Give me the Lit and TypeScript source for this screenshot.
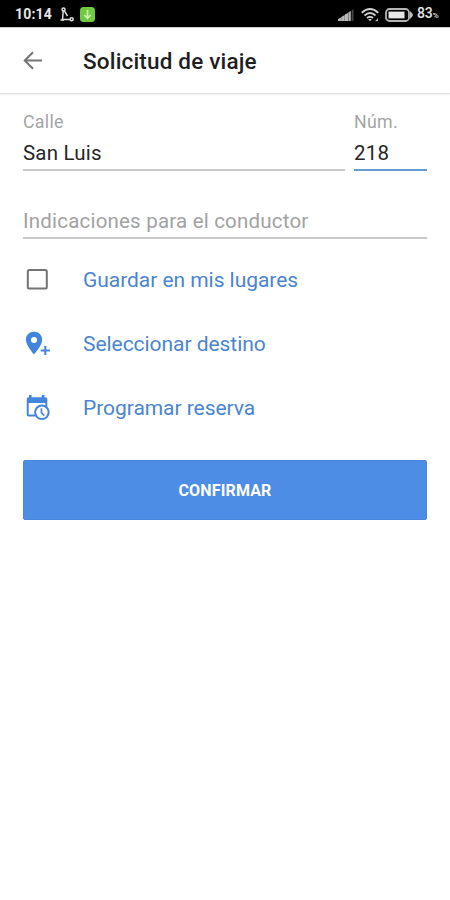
import { LitElement, html, css, svg } from "lit";
import { customElement } from "lit/decorators.js";

@customElement("status-bar")
class StatusBar extends LitElement {
  static styles = css`
    :host { display: flex; align-items: center; height: 27px; background: #000; color: #e6e6e6;
      font: 700 14px/27px Roboto, sans-serif; border-bottom: 1px solid #c9c9c9; box-sizing: content-box; }
    svg { display: block; flex: none; }
    .time { margin-left: 15px; width: 45px; letter-spacing: 0.2px; padding-top: 2px; }
    .route { margin-top: 1px; }
    .app { margin-left: 6px; margin-top: 1px; }
    .space { flex: 1; }
    .signal { margin-top: 2px; }
    .wifi { margin-left: 7px; margin-top: 2px; }
    .battery { margin-left: 6px; margin-top: 2px; }
    .level { margin-left: 4px; width: 33px; font-weight: 500; letter-spacing: -0.1px; padding-top: 2px; white-space: nowrap; }
    .pct { font-size: 8px; }
  `;
  render() {
    return html`
      <span class="time">10:14</span>
      <svg class="route" width="14" height="15" viewBox="0 0 14 15" fill="none" stroke="#e0e0e0" stroke-width="1.5">
        <circle cx="3.5" cy="2.4" r="1.5" /><path d="M3.2 4L2.5 12.6H10M4.6 4.2L7.5 9" />
        <circle cx="11.6" cy="12.3" r="1.5" /><path d="M.5 13H4" />
      </svg>
      <svg class="app" width="15" height="15" viewBox="0 0 15 15">
        <rect width="15" height="15" rx="3.5" fill="#6fc943" />
        <path d="M7.5 3V11M4.3 8L7.5 11.2L10.7 8" fill="none" stroke="#c9f3ac" stroke-width="1.7" />
      </svg>
      <span class="space"></span>
      <svg class="signal" width="16" height="12" viewBox="0 0 16 12" fill="#b8b8b8">
        <path d="M0 12V10L3 8.5V12ZM3.2 12V8L6.7 6V12ZM6.9 12V5.5L10.3 3.7V12Z" /><path d="M10.5 12V3.2L12.8 2V12Z" />
        <path d="M13.6 12V1.5L15.5 0V12Z" fill="#444" />
      </svg>
      <svg class="wifi" width="18" height="14" viewBox="0 0 18 14" fill="none" stroke="#d0d0d0" stroke-width="1.9">
        <path d="M.8 4.8Q9-2.6 17.2 4.8M3.5 7.5Q9 2.6 14.5 7.5M6 10Q9 7.5 12 10" /><path d="M7.2 11L9 13.2L10.8 11Z" fill="#d0d0d0" stroke="none" />
        <path d="M14 13.3H17V10Z" fill="#aaa" stroke="none" />
      </svg>
      <svg class="battery" width="28" height="14" viewBox="0 0 28 14">
        <rect x="1" y="1" width="23" height="12" rx="3.5" fill="none" stroke="#b5b5b5" stroke-width="1.8" />
        <rect x="3.5" y="3.6" width="16" height="6.8" fill="#e5e5e5" /><path d="M25 3L27.8 6V8L25 11Z" fill="#bbb" />
      </svg>
      <span class="level">83<span class="pct">%</span></span>`;
  }
}

@customElement("text-field")
class TextField extends LitElement {
  static properties = { label: {}, value: {}, active: { type: Boolean } };
  declare label: string;
  declare value: string;
  declare active: boolean;
  static styles = css`
    :host { display: flex; flex-direction: column; box-sizing: border-box; border-bottom: 2px solid #c9c9c9; }
    :host([active]) { border-color: #659dd4; }
    .label { font-size: 17.8px; line-height: 24px; color: #a5a5a5; letter-spacing: 0.3px; padding-top: 1px; }
    .value { font-size: 20.5px; line-height: 28px; color: #262626; margin-top: 5px; letter-spacing: 0.2px; }
    .hint { font-size: 20.5px; line-height: 28px; color: #a2a2a2; letter-spacing: 0.2px; }
  `;
  render() {
    return this.value
      ? html`<span class="label">${this.label}</span><span class="value">${this.value}</span>`
      : html`<span class="hint">${this.label}</span>`;
  }
}

const box = svg`<rect x="4.8" y="4" width="19" height="18.6" rx="1.6" fill="none" stroke="#747474" stroke-width="2"/>`;
const pin = svg`<path fill-rule="evenodd" d="M11 1.8C6.4 1.8 2.9 5.3 2.9 9.8C2.9 15.7 11 24.4 11 24.4S19.2 15.7 19.2 9.8C19.2 5.3 15.7 1.8 11 1.8ZM11 6.9A3 3 0 1 1 11 12.9A3 3 0 1 1 11 6.9Z"/>
  <path d="M21.3 15.9H23.3V19.4H26.9V21.4H23.3V25H21.3V21.4H17.7V19.4H21.3Z"/>`;
const calendar = svg`<path d="M6 1H8.6V3.2H18.8V1H21.4V3.2H22.3Q24.3 3.2 24.3 5.2V13H22.3V9H5.7V20.6H13V22.6H5.7Q3.7 22.6 3.7 20.6V5.2Q3.7 3.2 5.7 3.2H6Z"/>
  <circle cx="18.9" cy="18.3" r="6.8" fill="#fff" stroke="#4384dc" stroke-width="2"/>
  <path d="M18.4 14.2V18.6L21.2 21.6" fill="none" stroke="#4384dc" stroke-width="1.6"/>`;

@customElement("app-root")
class AppRoot extends LitElement {
  static styles = css`
    :host { display: flex; flex-direction: column; height: 900px; background: #fff; font-family: Roboto, sans-serif; overflow: hidden; }
    svg { display: block; flex: none; }
    header { display: flex; align-items: center; border-bottom: 1px solid #dedede; box-shadow: 0 1px 2px #eee; box-sizing: border-box; height: 66px; padding-left: 23px; }
    h1 { margin: 0 0 0 40px; font-size: 22.5px; line-height: 30px; font-weight: 500; color: #1f1f1f; letter-spacing: 0.17px; }
    main { display: flex; flex-direction: column; padding: 15px 23px 0; }
    .address { display: grid; grid-template-columns: 322px 73px; gap: 9px; height: 62px; }
    .notes { margin-top: 36px; height: 32px; }
    ul { list-style: none; margin: 9px 0 0; padding: 0; }
    li { display: flex; align-items: center; height: 64px; color: #4a85cf; font-size: 21px; letter-spacing: -0.05px; gap: 32px; }
    button { margin-top: 20px; height: 60px; border: 1px solid #4a86d9; border-radius: 2px; background: #4e8de5; color: #fff;
      font: 700 16px/24px Roboto, sans-serif; letter-spacing: 0.15px; padding: 2px 0 0; }
  `;
  private actions = [
    { icon: box, text: "Guardar en mis lugares" },
    { icon: pin, text: "Seleccionar destino" },
    { icon: calendar, text: "Programar reserva" },
  ];
  render() {
    return html`
      <status-bar></status-bar>
      <header>
        <svg width="20" height="20" viewBox="0 0 20 20" fill="none" stroke="#757575" stroke-width="2">
          <path d="M19 9.5H2M10 1.2L1.7 9.5L10 17.8" />
        </svg>
        <h1>Solicitud de viaje</h1>
      </header>
      <main>
        <div class="address">
          <text-field label="Calle" value="San Luis"></text-field>
          <text-field label="Núm." value="218" active></text-field>
        </div>
        <text-field class="notes" label="Indicaciones para el conductor"></text-field>
        <ul>
          ${this.actions.map((a) => html`<li>
            <svg width="28" height="28" viewBox="0 0 28 28" fill="#4384dc">${a.icon}</svg><span>${a.text}</span>
          </li>`)}
        </ul>
        <button>CONFIRMAR</button>
      </main>`;
  }
}
